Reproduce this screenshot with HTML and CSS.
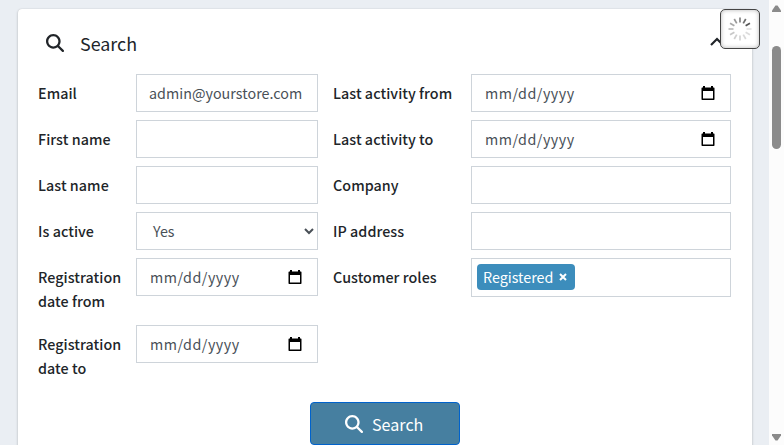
FILE: index.html
```html
<!DOCTYPE html>
<html lang="en">
<head>
<meta charset="utf-8">
<title>Customers</title>
<link rel="stylesheet" href="styles.css">
</head>
<body>
<svg class="defs" width="0" height="0" aria-hidden="true">
  <symbol id="glass" viewBox="0 0 512 512"><path d="M416 208c0 45.900-14.900 88.300-40 122.700L502.600 457.400c12.500 12.500 12.500 32.800 0 45.300s-32.800 12.500-45.300 0L330.700 376c-34.400 25.200-76.800 40-122.700 40C93.100 416 0 322.900 0 208S93.100 0 208 0s208 93.100 208 208zM208 352a144 144 0 1 0 0-288 144 144 0 1 0 0 288z"/></symbol>
  <symbol id="cal" viewBox="0 0 14 15"><path fill-rule="evenodd" d="M2 0h2v1.500h6V0h2v1.500h.5c.8 0 1 .4 1 1V13c0 .7-.3 1-1 1h-11c-.7 0-1-.3-1-1V2.500c0-.6.300-1 1-1H2zM2 5v7.500h10V5z"/></symbol>
</svg>
<div class="layout">
  <main class="page">
    <section class="card">
      <header class="card-head">
        <svg class="head-icon"><use href="#glass"/></svg>
        <h1 class="title">Search</h1>
        <svg class="chevron" viewBox="0 0 14 9"><path d="M1 8 7 2l6 6"/></svg>
      </header>
      <div class="columns">
        <div class="col col-left">
          <div class="row"><label>Email</label><div class="field email">admin@yourstore.com</div></div>
          <div class="row"><label>First name</label><div class="field"></div></div>
          <div class="row"><label>Last name</label><div class="field"></div></div>
          <div class="row"><label>Is active</label><div class="field select"><span>Yes</span><svg class="caret" viewBox="0 0 10 7"><path d="m1 1 4 4 4-4"/></svg></div></div>
          <div class="row tall"><label>Registration date from</label><div class="field date"><span>mm/dd/yyyy</span><svg class="cal"><use href="#cal"/></svg></div></div>
          <div class="row tall"><label>Registration date to</label><div class="field date"><span>mm/dd/yyyy</span><svg class="cal"><use href="#cal"/></svg></div></div>
        </div>
        <div class="col col-right">
          <div class="row"><label>Last activity from</label><div class="field date"><span>mm/dd/yyyy</span><svg class="cal"><use href="#cal"/></svg></div></div>
          <div class="row"><label>Last activity to</label><div class="field date"><span>mm/dd/yyyy</span><svg class="cal"><use href="#cal"/></svg></div></div>
          <div class="row"><label>Company</label><div class="field"></div></div>
          <div class="row"><label>IP address</label><div class="field"></div></div>
          <div class="row"><label>Customer roles</label><div class="field roles"><span class="tag">Registered<svg class="remove" viewBox="0 0 8 8"><path d="m1 1 6 6M7 1 1 7"/></svg></span></div></div>
        </div>
      </div>
      <button class="search-btn"><svg class="btn-icon"><use href="#glass"/></svg><span>Search</span></button>
    </section>
    <div class="busy">
      <svg class="spinner" viewBox="-12 -12 24 24">
        <path d="M0-6.500v-5" opacity=".72"/>
        <path d="M0-6.500v-5" transform="rotate(30)" opacity=".85"/>
        <path d="M0-6.500v-5" transform="rotate(60)" opacity="1"/>
        <path d="M0-6.500v-5" transform="rotate(90)" opacity=".17"/>
        <path d="M0-6.500v-5" transform="rotate(120)" opacity=".2"/>
        <path d="M0-6.500v-5" transform="rotate(150)" opacity=".22"/>
        <path d="M0-6.500v-5" transform="rotate(180)" opacity=".25"/>
        <path d="M0-6.500v-5" transform="rotate(210)" opacity=".28"/>
        <path d="M0-6.500v-5" transform="rotate(240)" opacity=".32"/>
        <path d="M0-6.500v-5" transform="rotate(270)" opacity=".4"/>
        <path d="M0-6.500v-5" transform="rotate(300)" opacity=".5"/>
        <path d="M0-6.500v-5" transform="rotate(330)" opacity=".6"/>
      </svg>
    </div>
  </main>
  <aside class="scrollbar">
    <svg class="arrow" viewBox="0 0 9 7"><path d="M3.500.5h2L9 5.500V7H0V5.500z"/></svg>
    <div class="thumb"></div>
    <svg class="arrow down" viewBox="0 0 9 7"><path d="M0 0h9v1.500L5.500 6.500h-2L0 1.500z"/></svg>
  </aside>
</div>
</body>
</html>
```
FILE: styles.css
```css
* { box-sizing: border-box; }
body {
  margin: 0;
  height: 445px;
  overflow: hidden;
  background: #eaeef3;
  color: #212529;
  font: 14.3px/24px "Noto Sans CJK SC", "Noto Sans", sans-serif;
}
svg { display: block; flex: none; }
.defs { position: absolute; }
.layout { display: flex; height: 445px; }
.page { position: relative; flex: 1; padding: 9px 17px 0 18px; overflow: hidden; }
.card {
  height: 480px;
  background: #fff;
  border-radius: 4px;
  box-shadow: 0 0 1px rgba(0,0,0,.16), 0 1px 3px rgba(0,0,0,.2);
}
.card-head { display: flex; align-items: center; height: 65px; padding: 3px 28px 0; }
.head-icon { width: 18px; height: 18px; margin-top: -1px; fill: #212529; }
.title { margin: 0 0 0 16px; font-size: 17.9px; font-weight: 400; line-height: 26px; }
.chevron { width: 14px; height: 9px; margin: -4px 0 0 auto; fill: none; stroke: #212529; stroke-width: 2.2; }
.columns { display: flex; gap: 15px; padding: 0 21px 0 20px; }
.col { display: flex; flex-direction: column; gap: 8px; }
.col-left { width: 280px; }
.col-right { width: 398px; }
.row { display: flex; justify-content: space-between; align-items: flex-start; height: 38px; }
.tall { height: 59px; }
label { padding-top: 7px; font-weight: 500; letter-spacing: .05px; }
.col-left label { width: 90px; }
.field {
  display: flex;
  align-items: center;
  height: 38px;
  border: 1px solid #ced4da;
  background: #fff;
  color: #495057;
  white-space: nowrap;
}
.col-left .field { width: 182px; }
.col-right .field { width: 260px; }
.email { padding-left: 12px; letter-spacing: .03px; }
.date { justify-content: space-between; padding: 0 15px 0 13px; }
.date span { letter-spacing: .5px; }
.cal { width: 14px; height: 15px; fill: #000; }
.select { justify-content: space-between; padding: 0 3px 0 16px; }
.caret { width: 10px; height: 7px; fill: none; stroke: #495057; stroke-width: 2; }
.col-right .roles { height: 39px; padding-left: 5px; }
.tag {
  display: flex;
  align-items: center;
  gap: 6px;
  width: 98px;
  height: 26px;
  margin-bottom: 1px;
  padding-left: 6px;
  border-radius: 4px;
  background: #3c8dbc;
  color: #fff;
}
.remove { width: 8px; height: 8px; fill: none; stroke: #fff; stroke-width: 2; }
.search-btn {
  display: flex;
  align-items: center;
  width: 150px;
  height: 43px;
  margin: 18px 0 0 292px;
  padding: 0 0 0 34px;
  gap: 9px;
  border: 1px solid #0062cc;
  border-radius: 4px;
  background: #467fa0;
  color: #fff;
  font: 16.1px/24px "Noto Sans CJK SC", "Noto Sans", sans-serif;
}
.btn-icon { width: 18px; height: 18px; fill: #fff; }
.busy {
  position: absolute;
  left: 720px;
  top: 9px;
  display: grid;
  place-items: center;
  width: 40px;
  height: 40px;
  border: 1px solid #444;
  border-radius: 5px;
  background: #fff;
  box-shadow: inset 0 0 4px rgba(0,0,0,.3);
}
.spinner { width: 24px; height: 24px; stroke: #555; stroke-width: 1.7; }
.scrollbar {
  display: flex;
  flex-direction: column;
  align-items: center;
  width: 15px;
  padding: 5px 0 4px;
  background: #fcfcfc;
}
.arrow { width: 9px; height: 7px; fill: #8b8b8b; }
.thumb { width: 9px; height: 103px; margin-top: 34px; border-radius: 5px; background: #8b8b8b; }
.down { margin-top: auto; }
```
